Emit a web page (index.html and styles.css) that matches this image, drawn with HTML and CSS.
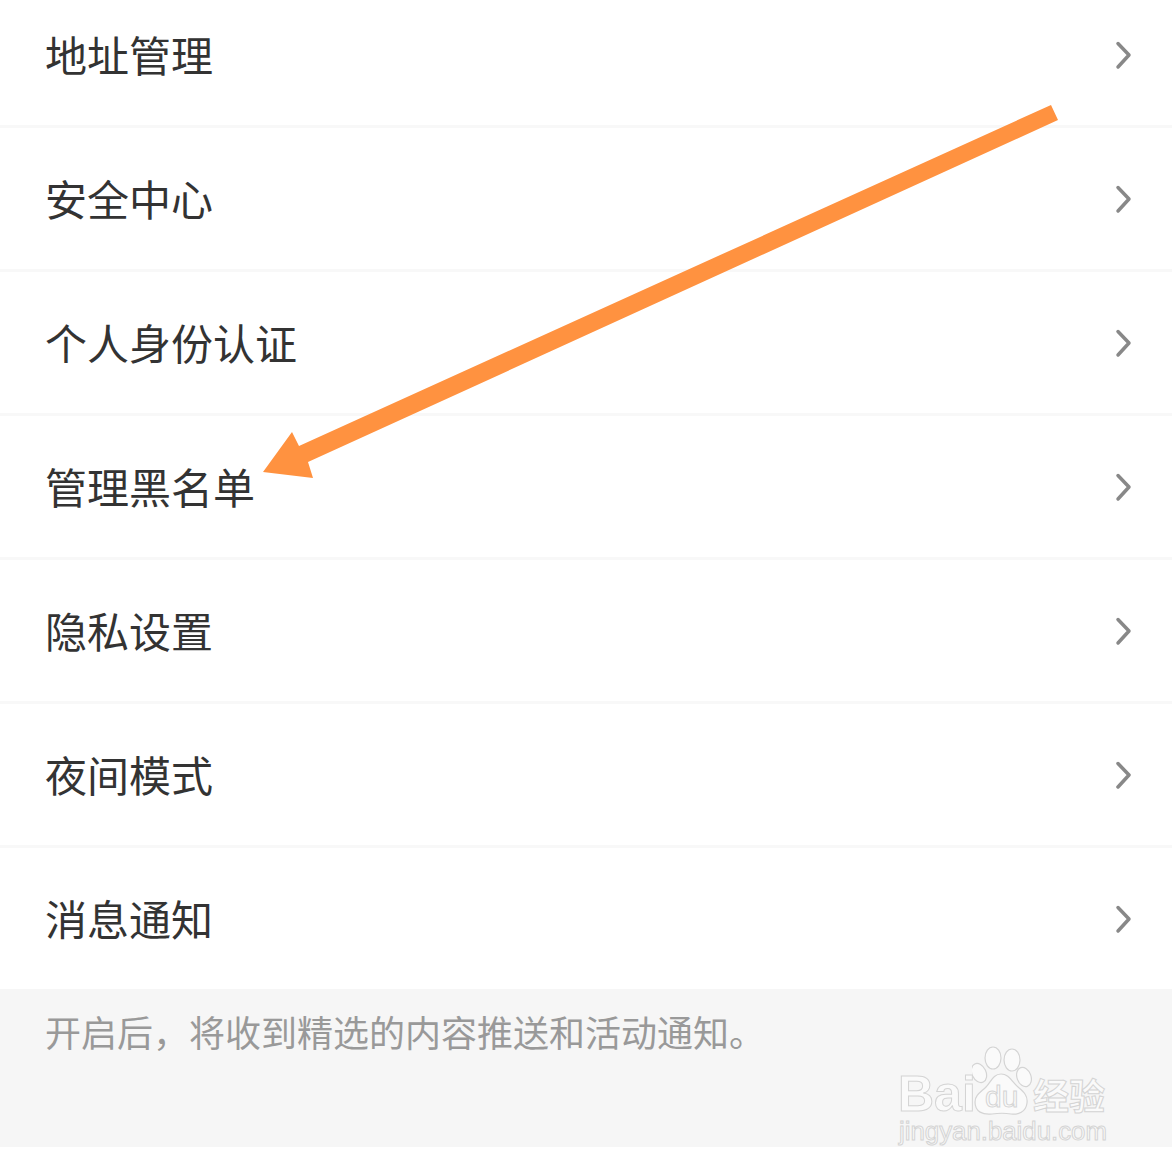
FILE: index.html
```html
<!DOCTYPE html>
<html lang="zh-CN">
<head>
    <meta charset="UTF-8">
    <meta name="viewport" content="width=device-width, initial-scale=1.0">
    <title>设置</title>
    <link rel="stylesheet" href="styles.css">
</head>
<body>
    <div class="page">
        <ul class="menu">
            <li class="menu-item"><span>地址管理</span><svg class="chevron" viewBox="0 0 20 30"><path d="M4 3.5 L15 15 L4 27"/></svg></li>
            <li class="menu-item"><span>安全中心</span><svg class="chevron" viewBox="0 0 20 30"><path d="M4 3.5 L15 15 L4 27"/></svg></li>
            <li class="menu-item"><span>个人身份认证</span><svg class="chevron" viewBox="0 0 20 30"><path d="M4 3.5 L15 15 L4 27"/></svg></li>
            <li class="menu-item"><span>管理黑名单</span><svg class="chevron" viewBox="0 0 20 30"><path d="M4 3.5 L15 15 L4 27"/></svg></li>
            <li class="menu-item"><span>隐私设置</span><svg class="chevron" viewBox="0 0 20 30"><path d="M4 3.5 L15 15 L4 27"/></svg></li>
            <li class="menu-item"><span>夜间模式</span><svg class="chevron" viewBox="0 0 20 30"><path d="M4 3.5 L15 15 L4 27"/></svg></li>
            <li class="menu-item"><span>消息通知</span><svg class="chevron" viewBox="0 0 20 30"><path d="M4 3.5 L15 15 L4 27"/></svg></li>
        </ul>
        <div class="note">开启后，将收到精选的内容推送和活动通知。</div>

        <!-- annotation arrow drawn over the screenshot -->
        <svg class="arrow" viewBox="0 0 1172 1172">
            <polygon points="1051,105 1058,120 308,462 313,478 263,472 292,432 299,446"/>
        </svg>

        <!-- watermark -->
        <div class="watermark">
            <span class="wm-bai">Bai</span>
            <svg class="wm-paw" viewBox="0 0 60 72">
                <ellipse cx="21" cy="12" rx="8" ry="11"/>
                <ellipse cx="40" cy="14" rx="8" ry="11"/>
                <ellipse cx="7" cy="27" rx="7" ry="10" transform="rotate(-25 7 27)"/>
                <ellipse cx="52" cy="31" rx="7" ry="10" transform="rotate(-20 52 31)"/>
                <path d="M29 28 C37 28 40 36 46 41 C52 46 56 50 55 57 C54 66 46 69 39 68 C33 67 27 67 20 68 C11 69 3 66 3 56 C3 49 9 46 14 41 C19 36 21 28 29 28 Z"/>
            </svg>
            <span class="wm-du">du</span>
            <span class="wm-jy">经验</span>
            <span class="wm-url">jingyan.baidu.com</span>
        </div>
    </div>
</body>
</html>
```

FILE: styles.css
```css
* {
    box-sizing: border-box;
}

body {
    margin: 0;
    background: #fff;
    font-family: "Noto Sans CJK SC", "Noto Sans", sans-serif;
}

.page {
    position: relative;
    width: 1172px;
    height: 1172px;
    overflow: hidden;
}

.menu {
    list-style: none;
    margin: -16px 0 0;
    padding: 0;
}

.menu-item {
    display: flex;
    align-items: center;
    justify-content: space-between;
    height: 144px;
    padding: 0 38px 3px 45px;
    border-bottom: 3px solid #f8f8f8;
    font-size: 42px;
    color: #333;
}

.menu-item:last-child {
    height: 141px;
    padding-bottom: 2px;
    border-bottom: 0;
}

.chevron {
    width: 20px;
    height: 30px;
    margin-top: 3px;
    fill: none;
    stroke: #888;
    stroke-width: 3.5;
    stroke-linecap: round;
    stroke-linejoin: round;
}

.note {
    height: 158px;
    padding: 16px 45px 0;
    background: #f6f6f6;
    font-size: 36px;
    line-height: 52px;
    color: #999;
}

.arrow {
    position: absolute;
    top: 0;
    left: 0;
    width: 1172px;
    height: 1172px;
    fill: #ff9240;
}

.watermark span {
    position: absolute;
    color: #fafafa;
    -webkit-text-stroke: 1px #d4d4d4;
    line-height: 1;
}

.wm-bai {
    left: 898px;
    top: 1069px;
    font-family: "Liberation Sans", sans-serif;
    font-size: 50px;
    font-weight: bold;
}

.wm-paw {
    position: absolute;
    left: 972px;
    top: 1046px;
    width: 60px;
    height: 72px;
    fill: #fafafa;
    stroke: #d4d4d4;
    stroke-width: 1.2;
}

.watermark .wm-du {
    left: 985px;
    top: 1082px;
    font-family: "Liberation Sans", sans-serif;
    font-size: 30px;
}

.wm-jy {
    left: 1033px;
    top: 1076px;
    font-size: 36px;
    font-weight: bold;
}

.wm-url {
    left: 899px;
    top: 1119px;
    font-family: "Liberation Sans", sans-serif;
    font-size: 25.8px;
}
```
